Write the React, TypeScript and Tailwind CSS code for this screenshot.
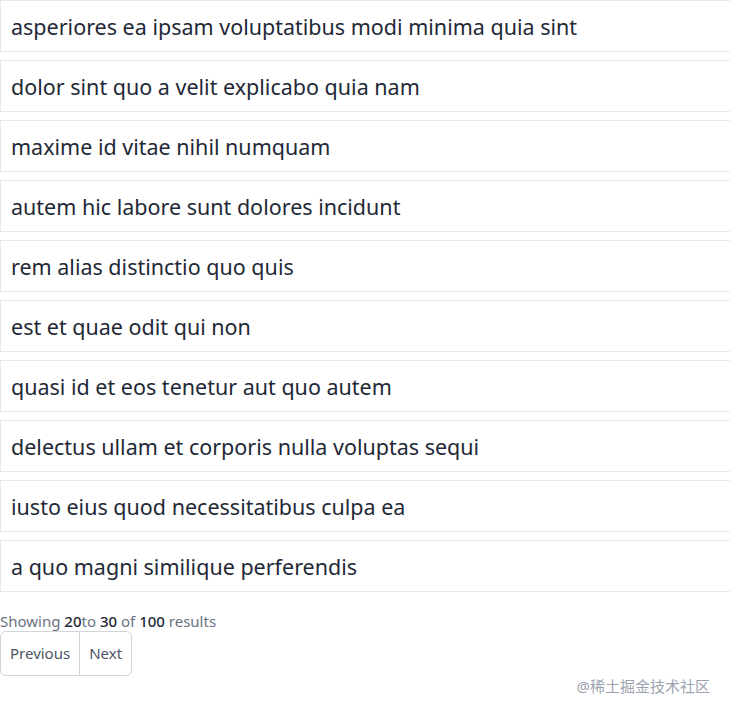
const todos = [
  'asperiores ea ipsam voluptatibus modi minima quia sint',
  'dolor sint quo a velit explicabo quia nam',
  'maxime id vitae nihil numquam',
  'autem hic labore sunt dolores incidunt',
  'rem alias distinctio quo quis',
  'est et quae odit qui non',
  'quasi id et eos tenetur aut quo autem',
  'delectus ullam et corporis nulla voluptas sequi',
  'iusto eius quod necessitatibus culpa ea',
  'a quo magni similique perferendis',
]

export default function App() {
  return (
    <div className="relative min-h-[714px] bg-white font-['Noto_Sans',sans-serif] overflow-hidden">
      <ul className="w-[740px]">
        {todos.map((title) => (
          <li key={title}
            className="flex items-center h-[52px] mb-2 pt-[2px] px-[10px] border border-[#e8e8e8] text-[21.5px] text-[#1f2937]">
            {title}
          </li>
        ))}
      </ul>
      <p className="mt-[19px] text-[15px] leading-5 text-[#6b7280]">
        Showing <span className="font-medium text-[#1f2937]">20</span>to{' '}
        <span className="font-medium text-[#1f2937]">30</span> of{' '}
        <span className="font-medium text-[#1f2937]">100</span> results
      </p>
      <div className="inline-flex border border-[#d1d5db] rounded-md overflow-hidden text-[15px] text-[#4b5563]">
        <button className="h-[43px] px-[9px] border-r border-[#d1d5db]">Previous</button>
        <button className="h-[43px] px-[9px]">Next</button>
      </div>
      <div className="absolute right-[20px] top-[675px] text-[15px] text-[#9ca3af] font-['Noto_Sans','Noto_Sans_CJK_SC',sans-serif]">
        @稀土掘金技术社区
      </div>
    </div>
  )
}
